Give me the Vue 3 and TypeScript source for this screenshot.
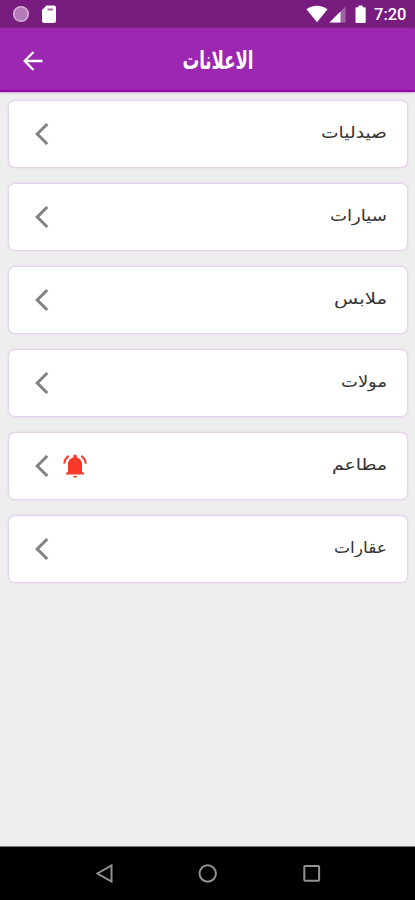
<script setup lang="ts">
interface Category {
  name: string
  width: number
  hasAlert?: boolean
}

const categories: Category[] = [
  { name: 'صيدليات', width: 66 },
  { name: 'سيارات', width: 57 },
  { name: 'ملابس', width: 53 },
  { name: 'مولات', width: 46 },
  { name: 'مطاعم', width: 55, hasAlert: true },
  { name: 'عقارات', width: 53 },
]
</script>

<template>
  <div class="screen">
    <div class="status">
      <svg width="60" height="28" viewBox="0 0 60 28">
        <circle cx="21" cy="14" r="7.3" fill="#b67cba" />
        <circle cx="21" cy="14" r="7.3" fill="none" stroke="#d5b2d8" stroke-width="1.5" />
        <path d="M46.5 5.5H54a2 2 0 0 1 2 2V21a2 2 0 0 1-2 2H44a2 2 0 0 1-2-2V10z" fill="#fff" />
        <path d="M47.500 9.500h5.500" stroke="#9a6a9e" stroke-width="2" />
      </svg>
      <div class="status-right">
        <svg width="64" height="28" viewBox="306 0 64 28">
          <path d="M306.500 9.200C312 4.500 321.500 4.500 327.500 9.200L317 22.300z" fill="#fff" />
          <path d="M345.500 6.500V22.500H329.500z" fill="#a064a6" />
          <path d="M340.500 11.500V22.500H329.500z" fill="#fff" />
          <path d="M358.500 5.500h4.200v1.800h2a1 1 0 0 1 1 1V22a1 1 0 0 1-1 1h-8.200a1 1 0 0 1-1-1V8.300a1 1 0 0 1 1-1h2z" fill="#fff" />
        </svg>
        <span class="clock">7:20</span>
      </div>
    </div>
    <header class="bar">
      <svg class="back" width="20" height="20" viewBox="0 0 20 20" fill="none" stroke="#fff" stroke-width="2.300">
        <path d="M19.500 10H2M10.500 1L1.700 10l8.800 9" />
      </svg>
      <h1 class="title">
        <svg class="title-art" width="72" height="34" viewBox="0 0 72 34">
          <text class="title-text" transform="scale(1 1.400)" x="71.500" y="18" textLength="71" lengthAdjust="spacingAndGlyphs">الاعلانات</text>
        </svg>
      </h1>
    </header>
    <main class="list">
      <div v-for="item in categories" :key="item.name" class="card">
        <svg class="chevron" width="14" height="22" viewBox="0 0 14 22" fill="none" stroke="#828282" stroke-width="3">
          <path d="M12.300 1L2.200 11l10.100 10" />
        </svg>
        <svg v-if="item.hasAlert" class="bell" width="24" height="24" viewBox="0 0 24 24" fill="#f6392a">
          <path d="M12 23.800a2 2 0 0 0 2-1.800h-4a2 2 0 0 0 2 1.800zM19 17.500V10c0-3.300-2.300-5.700-5.300-6.500V2.200a1.700 1.700 0 0 0-3.400 0v1.300C7.300 4.300 5 6.700 5 10v7.500L3 19.300v1.200h18v-1.200z" />
          <path d="M5.800 1.800C3 3.700 1.500 6.300 1.200 9.700M18.200 1.800c2.800 1.900 4.300 4.500 4.600 7.900" fill="none" stroke="#f6392a" stroke-width="2" />
        </svg>
        <svg class="name" width="80" height="30" viewBox="0 0 80 30">
          <text class="name-text" x="80" y="19" :textLength="item.width" lengthAdjust="spacingAndGlyphs">{{ item.name }}</text>
        </svg>
      </div>
    </main>
    <nav class="nav">
      <svg width="415" height="54" viewBox="0 0 415 54" fill="none" stroke="#929292" stroke-width="2">
        <path d="M111.500 18.500v16L97.500 26.500z" />
        <circle cx="207.700" cy="26.500" r="8.200" />
        <rect x="304.300" y="19" width="14.800" height="14.800" rx="0.800" />
      </svg>
    </nav>
  </div>
</template>

<style>
body {
  margin: 0;
}
</style>

<style scoped>
.screen {
  width: 415px;
  height: 900px;
  display: flex;
  flex-direction: column;
  overflow: hidden;
  background: #eee;
  font-family: "DejaVu Sans", sans-serif;
}
.status {
  height: 28px;
  flex: none;
  display: flex;
  justify-content: space-between;
  background: #781c80;
}
.status-right {
  display: flex;
  gap: 4px;
  padding-right: 8px;
}
.clock {
  width: 33px;
  font: 500 16.500px/30px Roboto, sans-serif;
  color: #fff;
  white-space: nowrap;
}
.bar {
  height: 64px;
  flex: none;
  box-sizing: border-box;
  display: grid;
  grid-template-columns: 1fr auto 1fr;
  align-items: center;
  padding: 3px 0 0 23px;
  background: #9c27b0;
  border-bottom: 2px solid #9208a3;
  box-shadow: 0 1px 2px #c9a9cf;
}
.title {
  margin: 0 3px 0 0;
  height: 34px;
}
.title-art,
.name {
  display: block;
  overflow: visible;
}
.title-text {
  direction: rtl;
  font-size: 18px;
  font-weight: 700;
  fill: #fff;
}
.list {
  flex: 1;
  display: flex;
  flex-direction: column;
  gap: 17.100px;
  padding: 9px 8px 0 9px;
}
.card {
  height: 66px;
  box-sizing: border-box;
  display: flex;
  align-items: center;
  padding: 0 20px 0 26px;
  background: #fff;
  border-radius: 6px;
  box-shadow: 0 0 2px 1px #e3c9ea;
}
.bell {
  margin-left: 14px;
}
.name {
  margin-left: auto;
}
.name-text {
  direction: rtl;
  font-size: 16px;
  fill: #333;
}
.nav {
  height: 54px;
  flex: none;
  background: #000;
  border-top: 1px solid #777;
  box-sizing: border-box;
}
</style>
